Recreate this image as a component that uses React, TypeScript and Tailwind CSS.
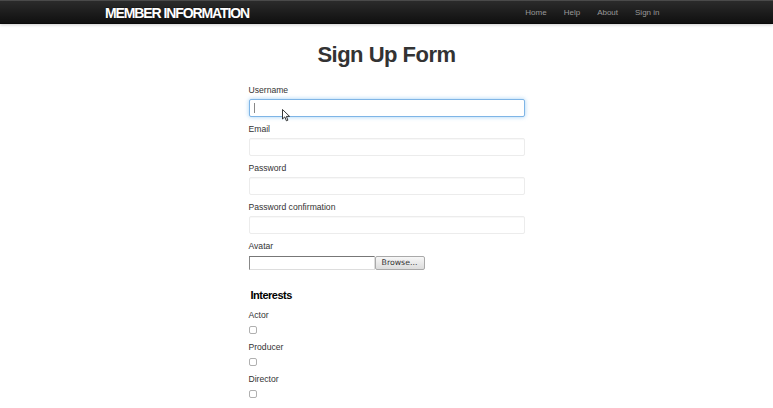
import React from "react";

const navLinks = ["Home", "Help", "About", "Sign in"];

const fields = [
	{ label: "Username", type: "text", focused: true },
	{ label: "Email", type: "email", focused: false },
	{ label: "Password", type: "password", focused: false },
	{ label: "Password confirmation", type: "password", focused: false }
];

const interests = ["Actor", "Producer", "Director"];

function Navbar() {
	return (
		<div className="h-[24px] border-t border-t-[#4a4a4a] border-b border-b-[#0a0a0a] bg-gradient-to-b from-[#2b2b2b] to-[#101010] shadow-[0_1px_3px_rgba(0,0,0,0.2)]">
			<div className="mx-auto flex h-full w-[563px] items-center justify-between pt-[2px]">
				<span className="text-[14px] font-bold leading-[16px] tracking-[-1.1px] text-white [text-shadow:0_-1px_0_rgba(0,0,0,0.25)]">
					MEMBER INFORMATION
				</span>
				<ul className="flex text-[8px] leading-[12px]">
					{navLinks.map(link => (
						<li key={link}>
							<a href="#" className="block px-[8.5px] text-[#999]">
								{link}
							</a>
						</li>
					))}
				</ul>
			</div>
		</div>
	);
}

function TextField({
	label,
	type,
	focused
}: {
	label: string;
	type: string;
	focused: boolean;
}) {
	return (
		<div className="mb-[6px]">
			<label className="block h-[12px] text-[8.6px] leading-[12px] text-[#333]">
				{label}
			</label>
			<div className="relative mt-[3px]">
				<input
					type={type}
					className={
						focused
							? "block h-[18px] w-full rounded-[2px] border border-[#7fb5e6] bg-white shadow-[0_0_4px_rgba(82,168,236,0.55)] outline-none"
							: "block h-[18px] w-full rounded-[2px] border border-[#ececec] bg-white shadow-[inset_0_1px_1px_rgba(0,0,0,0.03)] outline-none"
					}
				/>
				{focused && (
					<>
						<span className="absolute left-[5px] top-[4px] h-[10px] w-px bg-[#888]" />
						<svg
							className="absolute left-[33px] top-[10px]"
							width="9"
							height="13"
							viewBox="0 0 9 13"
						>
							<path
								d="M0.5 0.5 L0.5 10 L2.8 7.9 L4.4 11.8 L5.9 11.2 L4.4 7.4 L7.6 7.4 Z"
								fill="#fff"
								stroke="#222"
								strokeWidth="0.9"
								strokeLinejoin="round"
							/>
						</svg>
					</>
				)}
			</div>
		</div>
	);
}

export default function App() {
	return (
		<div className="min-h-[408px] bg-white font-['Liberation_Sans',Arial,sans-serif]">
			<Navbar />
			<div className="mx-auto w-[276px]">
				<h1 className="mt-[20px] h-[22px] whitespace-nowrap text-center text-[22px] font-bold leading-[22px] tracking-[-0.5px] text-[#333]">
					Sign Up Form
				</h1>
				<form className="mt-[18px]">
					{fields.map(field => (
						<TextField key={field.label} {...field} />
					))}
					<label className="block h-[12px] text-[8.6px] leading-[12px] text-[#333]">
						Avatar
					</label>
					<div className="mt-[4px] flex h-[14px]">
						<div className="h-full w-[126px] border border-t-[#777] border-l-[#888] border-r-[#ddd] border-b-[#ddd] bg-white" />
						<button
							type="button"
							className="h-full w-[50px] rounded-[2px] border border-[#a9a9a9] bg-gradient-to-b from-[#f7f7f7] to-[#dcdcdc] font-['DejaVu_Sans',sans-serif] text-[7.8px] leading-none text-[#333]"
						>
							Browse...
						</button>
					</div>
					<h3 className="mt-[18px] h-[14px] pl-[2px] text-[11px] font-bold leading-[14px] tracking-[-0.5px] text-black">
						Interests
					</h3>
					{interests.map(item => (
						<div key={item} className="mt-[7px]">
							<label className="block h-[12px] text-[8.6px] leading-[12px] text-[#333]">
								{item}
							</label>
							<div className="mt-[5px] h-[8px] w-[8px] rounded-[2px] border border-[#b0b0b0] bg-white" />
						</div>
					))}
				</form>
			</div>
		</div>
	);
}
